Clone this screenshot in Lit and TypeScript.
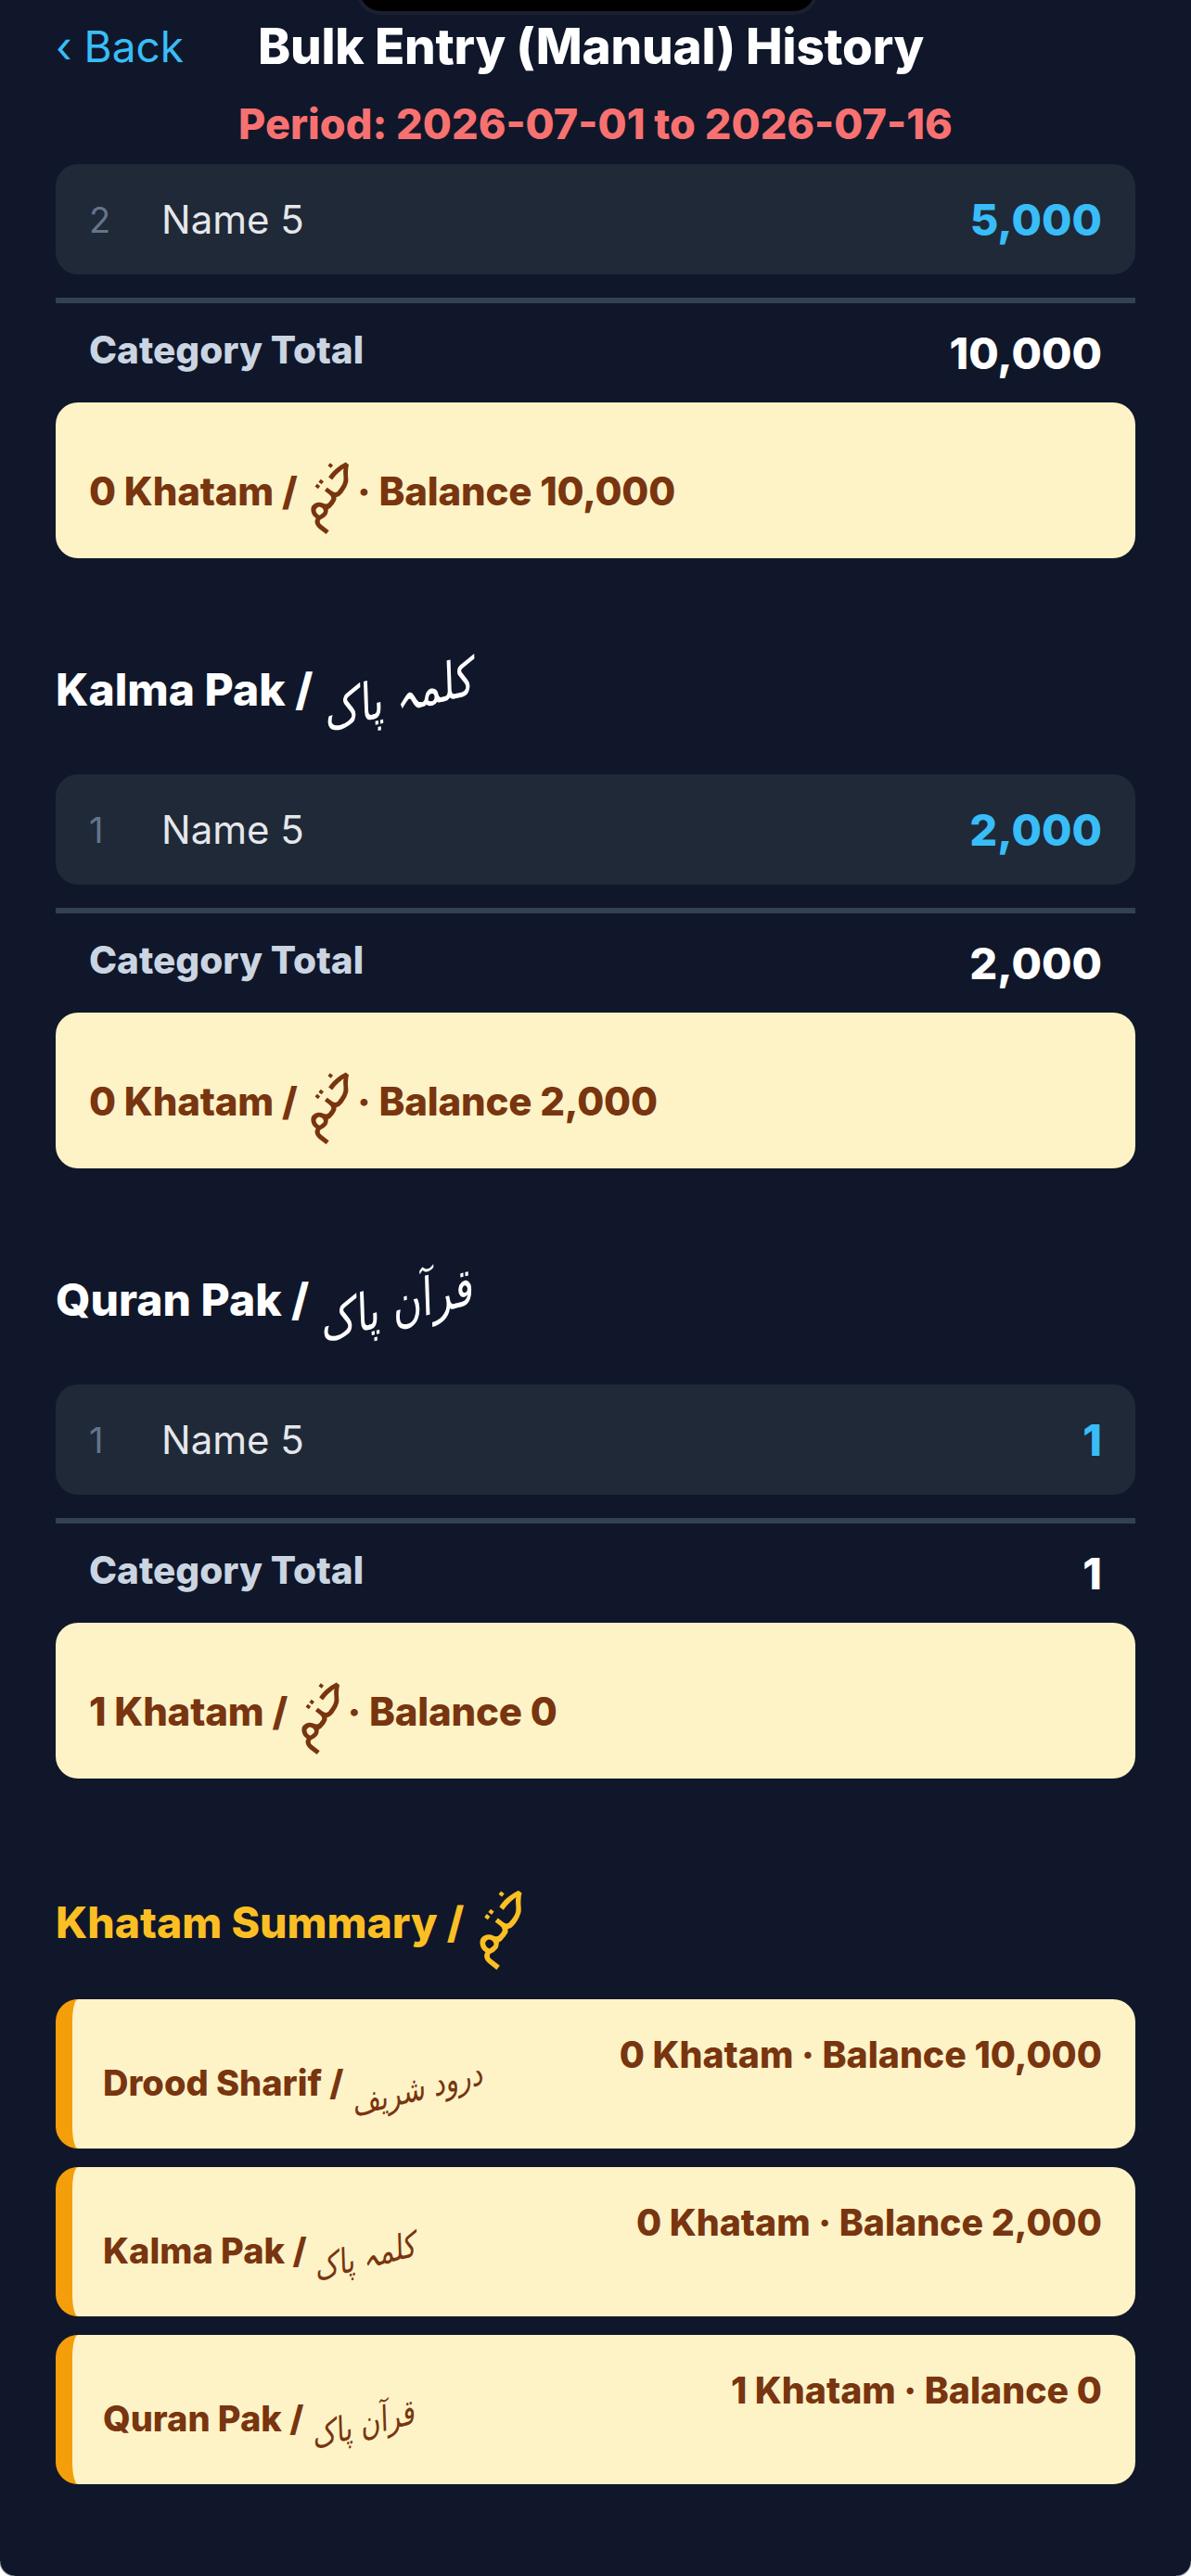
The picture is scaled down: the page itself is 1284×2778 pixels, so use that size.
import { LitElement, html, css } from "lit";
import { customElement } from "lit/decorators.js";

const KHATAM = "ختم";

interface Section { title?: string; urdu?: string; idx: number; value: string; total: string; khatam: string; balance: string; }
const sections: Section[] = [
  { idx: 2, value: "5,000", total: "10,000", khatam: "0", balance: "10,000" },
  { title: "Kalma Pak", urdu: "کلمہ پاک", idx: 1, value: "2,000", total: "2,000", khatam: "0", balance: "2,000" },
  { title: "Quran Pak", urdu: "قرآن پاک", idx: 1, value: "1", total: "1", khatam: "1", balance: "0" },
];
const summary = [
  { title: "Drood Sharif", urdu: "درود شریف", khatam: "0", balance: "10,000" },
  { title: "Kalma Pak", urdu: "کلمہ پاک", khatam: "0", balance: "2,000" },
  { title: "Quran Pak", urdu: "قرآن پاک", khatam: "1", balance: "0" },
];

@customElement("app-root")
export class AppRoot extends LitElement {
  static styles = css`
    :host {
      display: block;
      width: 1284px;
      height: 2778px;
      overflow: hidden;
      position: relative;
      background: #10172a;
      color: #fff;
      font-family: Inter, "Liberation Sans", sans-serif;
    }
    .notch {
      position: absolute;
      left: 388px;
      top: -10px;
      width: 490px;
      height: 22px;
      background: #000;
      border-radius: 0 0 26px 26px;
      box-shadow: 0 0 0 4px #1a2030;
    }
    .corner {
      position: absolute;
      bottom: 0;
      width: 16px;
      height: 16px;
      background: radial-gradient(circle at 16px 0, transparent 15px, #fff 17px);
    }
    .corner.left { left: 0; }
    .corner.right {
      right: 0;
      background: radial-gradient(circle at 0 0, transparent 15px, #fff 17px);
    }
    .ur {
      display: inline-block;
      font-family: "DejaVu Sans", sans-serif;
      font-weight: 400;
      font-size: 0.92em;
      line-height: 1;
      vertical-align: -0.08em;
      transform: rotate(-14deg) skewX(-12deg) scaleY(1.25);
    }
    .steep {
      font-size: 1.22em;
      margin: 0 -0.26em 0 -0.42em;
      vertical-align: 0.02em;
      transform: rotate(-52deg) scaleY(1.1);
    }
    .header {
      height: 100px;
      padding: 0 60px;
      display: flex;
      align-items: center;
      gap: 83px;
    }
    .back { color: #38bdf8; font-size: 46px; font-weight: 400; width: 135px; white-space: nowrap; }
    .title { font-size: 53px; font-weight: 800; letter-spacing: -0.2px; white-space: nowrap; }
    .period {
      height: 66px;
      margin-bottom: 11px;
      display: flex;
      align-items: center;
      justify-content: center;
      color: #f87171;
      font-size: 45px;
      font-weight: 800;
    }
    .content { padding: 0 60px; display: flex; flex-direction: column; }
    .heading {
      height: 100px;
      margin: 91px 0 42px;
      display: flex;
      align-items: center;
      font-size: 48px;
      font-weight: 800;
      white-space: pre;
    }
    .row {
      height: 119px;
      padding: 0 36px;
      display: flex;
      align-items: center;
      background: #1f2937;
      border-radius: 24px;
    }
    .idx { width: 78px; color: #64748b; font-size: 38px; }
    .name { flex: 1; color: #e5e7eb; font-size: 42px; }
    .val { color: #38bdf8; font-size: 47px; font-weight: 800; }
    .divider { height: 6px; margin-top: 25px; background: #334155; }
    .total {
      height: 107px;
      padding: 0 36px;
      display: flex;
      justify-content: space-between;
      align-items: center;
    }
    .total .label { color: #cbd5e1; font-size: 40.5px; font-weight: 800; margin-top: -6px; }
    .total .amt { font-size: 47px; font-weight: 800; }
    .cream {
      height: 168px;
      padding: 0 36px;
      background: #fef3c7;
      border-radius: 24px;
      color: #78350f;
      font-size: 42px;
      letter-spacing: -0.2px;
      font-weight: 800;
      display: flex;
      align-items: center;
      white-space: pre;
    }
    .cream > span:first-child { margin-top: 20px; }
    .sum-head {
      height: 100px;
      margin: 103px 0 35px;
      display: flex;
      align-items: center;
      color: #fbbf24;
      font-size: 46.4px;
      font-weight: 800;
      white-space: pre;
    }
    .cards { display: flex; flex-direction: column; gap: 20px; }
    .card {
      height: 161px;
      box-sizing: border-box;
      border-left: 18px solid #f59e0b;
      border-radius: 24px;
      background: #fef3c7;
      color: #78350f;
      padding: 0 36px 0 33px;
      display: flex;
      justify-content: space-between;
      align-items: flex-start;
      font-weight: 800;
      font-size: 39.3px;
      white-space: pre;
    }
    .card .l { margin-top: 60px; font-size: 38px; line-height: 60px; }
    .card .l .ur { font-size: 0.78em; }
    .card .r { margin-top: 36px; line-height: 48px; }
  `;

  render() {
    return html`
      <div class="notch"></div>
      <div class="corner left"></div>
      <div class="corner right"></div>
      <div class="header">
        <div class="back">‹ Back</div>
        <div class="title">Bulk Entry (Manual) History</div>
      </div>
      <div class="period">Period: 2026-07-01 to 2026-07-16</div>
      <div class="content">
        ${sections.map(
          (s) => html`
            ${s.title
              ? html`<div class="heading"><span>${s.title} / <span class="ur" lang="ur" dir="rtl">${s.urdu}</span></span></div>`
              : ""}
            <div class="row">
              <div class="idx">${s.idx}</div>
              <div class="name">Name 5</div>
              <div class="val">${s.value}</div>
            </div>
            <div class="divider"></div>
            <div class="total">
              <div class="label">Category Total</div>
              <div class="amt">${s.total}</div>
            </div>
            <div class="cream"><span>${s.khatam} Khatam / <span class="ur steep" lang="ur" dir="rtl">${KHATAM}</span> · Balance ${s.balance}</span></div>
          `
        )}
        <div class="sum-head"><span>Khatam Summary / <span class="ur steep" lang="ur" dir="rtl">${KHATAM}</span></span></div>
        <div class="cards">
          ${summary.map(
            (c) => html`
              <div class="card">
                <div class="l">${c.title} / <span class="ur" lang="ur" dir="rtl">${c.urdu}</span></div>
                <div class="r">${c.khatam} Khatam · Balance ${c.balance}</div>
              </div>
            `
          )}
        </div>
      </div>
    `;
  }
}
